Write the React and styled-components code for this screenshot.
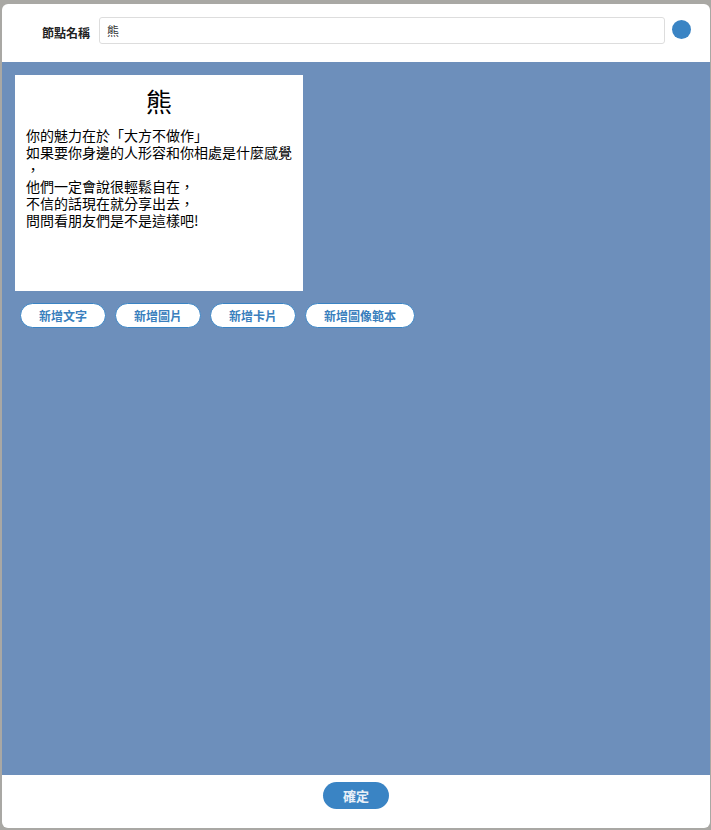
import styled, { createGlobalStyle } from 'styled-components'

const GlobalStyle = createGlobalStyle`
  html, body {
    margin: 0;
    padding: 0;
    background: #a9a8a4;
  }
  body {
    font-family: "Noto Sans CJK TC", "Noto Sans", sans-serif;
  }
`

const Page = styled.div`
  padding: 4px 1px 2px 2px;
  height: 830px;
  box-sizing: border-box;
`

const Dialog = styled.div`
  background: #fff;
  border-radius: 6px;
  height: 100%;
  display: flex;
  flex-direction: column;
  overflow: hidden;
`

const Header = styled.div`
  height: 58px;
  display: flex;
  align-items: flex-start;
  padding: 13px 19px 0 0;
  box-sizing: border-box;
`

const Label = styled.label`
  width: 88px;
  text-align: right;
  font-size: 12px;
  font-weight: 700;
  color: #222;
  line-height: 27px;
  margin-top: 2px;
  padding-right: 9px;
`

const NameInput = styled.input`
  flex: 1;
  height: 27px;
  box-sizing: border-box;
  border: 1px solid #ddd;
  border-radius: 3px;
  padding: 0 7px;
  font-size: 12px;
  font-family: "Noto Sans CJK TC", sans-serif;
  color: #333;
  outline: none;
`

const Dot = styled.div`
  width: 19px;
  height: 19px;
  border-radius: 50%;
  background: #3a84c4;
  margin: 3px 0 0 7px;
`

const Canvas = styled.div`
  flex: 1;
  background: #6d8fbb;
  padding: 13px 0 0 13px;
`

const Card = styled.div`
  width: 288px;
  height: 216px;
  background: #fff;
  box-sizing: border-box;
  padding: 8px 11px;
`

const CardTitle = styled.h2`
  margin: 0 0 8px;
  text-align: center;
  font-size: 26px;
  font-weight: 400;
  line-height: 36px;
  color: #000;
`

const CardText = styled.p`
  margin: 0;
  font-size: 14px;
  line-height: 17px;
  color: #000;
  white-space: pre-wrap;
  line-break: anywhere;
  word-break: break-all;
`

const Actions = styled.div`
  display: flex;
  gap: 9px;
  padding: 12px 0 0 5px;
`

const PillButton = styled.button`
  height: 25px;
  padding: 0 18px;
  border: 1px solid #3a84c4;
  border-radius: 13px;
  background: #fff;
  color: #3a7fbd;
  font-size: 12px;
  font-weight: 700;
  font-family: "Noto Sans CJK TC", sans-serif;
  cursor: pointer;
`

const Footer = styled.div`
  height: 53px;
  display: flex;
  justify-content: center;
  padding-top: 7px;
  box-sizing: border-box;
`

const ConfirmButton = styled.button`
  width: 66px;
  height: 27px;
  border: none;
  border-radius: 14px;
  background: #3a84c4;
  color: #e8f0f8;
  font-size: 13px;
  font-weight: 700;
  font-family: "Noto Sans CJK TC", sans-serif;
  cursor: pointer;
`

const text = `你的魅力在於「大方不做作」
如果要你身邊的人形容和你相處是什麼感覺，
他們一定會說很輕鬆自在，
不信的話現在就分享出去，
問問看朋友們是不是這樣吧!`

const buttons = ['新增文字', '新增圖片', '新增卡片', '新增圖像範本']

const App = () => {
  return (
    <Page>
      <GlobalStyle />
      <Dialog>
        <Header>
          <Label>節點名稱</Label>
          <NameInput defaultValue="熊" />
          <Dot />
        </Header>
        <Canvas>
          <Card>
            <CardTitle>熊</CardTitle>
            <CardText>{text}</CardText>
          </Card>
          <Actions>
            {buttons.map((b) => (
              <PillButton key={b}>{b}</PillButton>
            ))}
          </Actions>
        </Canvas>
        <Footer>
          <ConfirmButton>確定</ConfirmButton>
        </Footer>
      </Dialog>
    </Page>
  )
}

export default App
